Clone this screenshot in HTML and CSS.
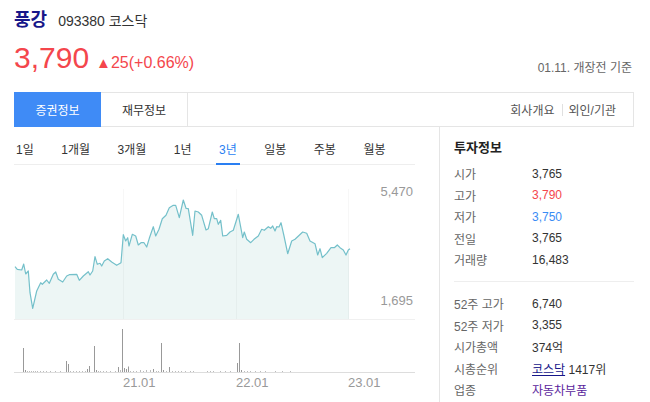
FILE: index.html
```html
<!DOCTYPE html>
<html lang="ko">
<head>
<meta charset="utf-8">
<title>풍강</title>
<link rel="stylesheet" href="styles.css">
</head>
<body>
<div class="wrap">
  <h1 class="title"><span class="name">풍강</span><span class="code">093380 코스닥</span></h1>
  <div class="quote">
    <span class="price">3,790</span>
    <span class="chg"><span class="tri">▲</span>25(+0.66%)</span>
    <span class="basis">01.11. 개장전 기준</span>
  </div>
  <div class="tabs">
    <span class="tab on">증권정보</span>
    <span class="tab">재무정보</span>
    <div class="links"><span>회사개요</span><span class="bar"></span><span>외인/기관</span></div>
  </div>
  <div class="main">
    <div class="chart-col">
      <ul class="periods">
        <li>1일</li><li>1개월</li><li>3개월</li><li>1년</li><li class="on">3년</li><li>일봉</li><li>주봉</li><li>월봉</li>
      </ul>
      <svg class="chart" width="401" height="236" viewBox="14 164 401 236" xmlns="http://www.w3.org/2000/svg">
        <polygon class="area" points="15,265.7 17.3,268.3 21.7,269 23.7,263 25.7,273 28.3,270 30,291.7 32.7,307.3 36.7,290 40.7,281.7 42.3,283.3 46.7,279 49.3,282.3 53.3,273.3 55.7,271 58.3,278.3 62.7,281 66.7,275 69.3,273.7 76.7,273.3 79.3,279.3 83.3,275 88.3,270.7 90,274 92.7,270 95,255.7 97.3,263.3 100,262.3 101.7,265 104.3,260 107.7,257.7 111.7,261 116.7,264.3 121,261.7 123.3,233.7 125.7,240 127.7,236.7 129,245 132.3,233.3 135.7,235 138.3,244 141,241.7 144,241.7 146.7,246 149.3,237.3 153.3,225.7 155.7,235 159,228.3 162.3,217.7 166,214.3 169.3,206.7 173.3,204.3 175.7,204.3 179.3,216.7 183.3,199 186,207.3 188.3,207.7 192.7,234.3 195,210 198.3,211 201.7,214.3 206,229 208.3,227.7 212.3,211 214.3,217.7 216.7,217.7 218.3,223.3 220.7,219.3 222.7,235 226.7,234.3 230,231 233.3,229.3 238.3,213.3 242.7,236.7 244.3,231 246.7,238.3 250.7,241.7 254,238.3 258.3,235 261.7,228.3 264.3,229.3 268.3,225.7 270.7,227.3 272.7,225 275,230 276.7,225.7 279,226 281,221.7 284,235 287.7,252.7 291.7,240 295,238.3 302.7,231 306.7,232.3 310,240 315,242.7 317.7,254 320,247.7 322.3,256.7 326.7,252.3 331,246.7 334.3,246.7 337.3,244 340,246.7 343.3,249 346,254 348.3,249 349,248.5 349,318 15,318"/>
        <path class="grid" d="M123.5 188V318M236.5 188V318M348.5 188V318"/>
        <path class="sep" d="M14 318.5H415"/>
        <polyline class="line" points="15,265.7 17.3,268.3 21.7,269 23.7,263 25.7,273 28.3,270 30,291.7 32.7,307.3 36.7,290 40.7,281.7 42.3,283.3 46.7,279 49.3,282.3 53.3,273.3 55.7,271 58.3,278.3 62.7,281 66.7,275 69.3,273.7 76.7,273.3 79.3,279.3 83.3,275 88.3,270.7 90,274 92.7,270 95,255.7 97.3,263.3 100,262.3 101.7,265 104.3,260 107.7,257.7 111.7,261 116.7,264.3 121,261.7 123.3,233.7 125.7,240 127.7,236.7 129,245 132.3,233.3 135.7,235 138.3,244 141,241.7 144,241.7 146.7,246 149.3,237.3 153.3,225.7 155.7,235 159,228.3 162.3,217.7 166,214.3 169.3,206.7 173.3,204.3 175.7,204.3 179.3,216.7 183.3,199 186,207.3 188.3,207.7 192.7,234.3 195,210 198.3,211 201.7,214.3 206,229 208.3,227.7 212.3,211 214.3,217.7 216.7,217.7 218.3,223.3 220.7,219.3 222.7,235 226.7,234.3 230,231 233.3,229.3 238.3,213.3 242.7,236.7 244.3,231 246.7,238.3 250.7,241.7 254,238.3 258.3,235 261.7,228.3 264.3,229.3 268.3,225.7 270.7,227.3 272.7,225 275,230 276.7,225.7 279,226 281,221.7 284,235 287.7,252.7 291.7,240 295,238.3 302.7,231 306.7,232.3 310,240 315,242.7 317.7,254 320,247.7 322.3,256.7 326.7,252.3 331,246.7 334.3,246.7 337.3,244 340,246.7 343.3,249 346,254 348.3,249 350,247.7"/>
        <text class="axis" x="413" y="195" text-anchor="end">5,470</text>
        <text class="axis" x="413" y="304" text-anchor="end">1,695</text>
        <path class="vol" d="M23.5 371V347M25.5 371V369M66.5 371V360M68.5 371V363M87.5 371V368M89.5 371V365M94.5 371V345M96.5 371V369M118.5 371V366M122.5 371V328M124.5 371V367M126.5 371V368M128.5 371V365.5M153.5 371V368M161.5 371V342M163.5 371V369M169.5 371V366M237.5 371V362M239.5 371V342M241.5 371V369"/>
        <path class="vol small" d="M27.5 371V370M29.5 371V370M31.5 371V370M33.5 371V370M35.5 371V370M37.5 371V370M40.5 371V370M43.5 371V370M46.5 371V370M50.5 371V370M55.5 371V370M60.5 371V370M70.5 371V370M73.5 371V370M76.5 371V370M79.5 371V370M82.5 371V370M85.5 371V370M98.5 371V370M100.5 371V370M103.5 371V370M106.5 371V370M110.5 371V370M115.5 371V370M120.5 371V369M130.5 371V370M133.5 371V370M136.5 371V370M140.5 371V369M143.5 371V370M146.5 371V369M150.5 371V369M156.5 371V370M158.5 371V370M166.5 371V370M172.5 371V370M175.5 371V370M178.5 371V370M181.5 371V370M185.5 371V370M190.5 371V370M193.5 371V370M207.5 371V370M210.5 371V370M213.5 371V370M220.5 371V370M225.5 371V370M230.5 371V370M244.5 371V370M247.5 371V370M250.5 371V370M255.5 371V370M260.5 371V370M265.5 371V370M275.5 371V370M282.5 371V370M290.5 371V370"/>
        <path class="base" d="M14 371.5H415"/>
        <text class="axis" x="123" y="386">21.01</text>
        <text class="axis" x="236" y="386">22.01</text>
        <text class="axis" x="348" y="386">23.01</text>
      </svg>
    </div>
    <div class="info">
      <h2 class="info-title">투자정보</h2>
      <dl class="grp">
        <div class="row"><dt>시가</dt><dd>3,765</dd></div>
        <div class="row"><dt>고가</dt><dd class="up">3,790</dd></div>
        <div class="row"><dt>저가</dt><dd class="down">3,750</dd></div>
        <div class="row"><dt>전일</dt><dd>3,765</dd></div>
        <div class="row"><dt>거래량</dt><dd>16,483</dd></div>
      </dl>
      <dl class="grp grp2">
        <div class="row"><dt>52주 고가</dt><dd>6,740</dd></div>
        <div class="row"><dt>52주 저가</dt><dd>3,355</dd></div>
        <div class="row"><dt>시가총액</dt><dd>374억</dd></div>
        <div class="row"><dt>시총순위</dt><dd><span class="lnk">코스닥</span> 1417위</dd></div>
        <div class="row"><dt>업종</dt><dd><span class="lnk2">자동차부품</span></dd></div>
      </dl>
    </div>
  </div>
</div>
</body>
</html>
```

FILE: styles.css
```css
* { box-sizing: border-box; }
html, body { margin: 0; padding: 0; background: #fff; }
body {
  font-family: "Liberation Sans", "Noto Sans CJK KR", sans-serif;
  color: #333;
  height: 402px;
  overflow: hidden;
}
.wrap { width: 620px; margin-left: 14px; padding-top: 8px; }

.title {
  margin: 0;
  display: flex;
  align-items: baseline;
  line-height: 24px;
}
.name { font-size: 18px; font-weight: 700; color: #17178a; }
.code { font-size: 14px; font-weight: 400; color: #333; margin-left: 11px; }

.quote {
  display: flex;
  align-items: baseline;
  height: 34px;
  margin-top: 8px;
}
.price { font-size: 30px; line-height: 34px; color: #f4464c; }
.chg { font-size: 16px; color: #f4464c; margin-left: 7px; }
.tri { font-size: 15px; margin-right: 0; }
.basis {
  margin-left: auto;
  margin-right: 2px;
  align-self: flex-end;
  font-size: 12px;
  line-height: 14px;
  color: #666;
}

.tabs {
  display: flex;
  height: 35px;
  margin-top: 17px;
  border: 1px solid #e5e5e5;
}
.tab {
  width: 87px;
  display: flex;
  align-items: center;
  justify-content: center;
  font-size: 12px;
  color: #333;
  border-right: 1px solid #e5e5e5;
}
.tab.on {
  margin: -1px 0 -1px -1px;
  width: 87px;
  background: #3f8bf6;
  color: #fff;
  border-right: 0;
}
.links {
  margin-left: auto;
  display: flex;
  align-items: center;
  padding-right: 17px;
  font-size: 12px;
  color: #555;
}
.bar { width: 1px; height: 12px; background: #e0e0e0; margin: 0 6px 0 7px; }

.main { display: flex; }
.chart-col { width: 401px; flex: none; }
.periods {
  display: flex;
  gap: 21.5px;
  margin: 0;
  padding: 0;
  list-style: none;
  border-bottom: 1px solid #eee;
}
.periods li {
  padding: 14px 3px 4px;
  font-size: 12px;
  line-height: 18px;
  color: #333;
  border-bottom: 2px solid transparent;
  margin-bottom: -1px;
}
.periods li:first-child { margin-left: -1px; }
.periods li.on { color: #2a7ff2; border-bottom-color: #2a7ff2; }

.chart { display: block; }
.area { fill: #edf6f5; }
.grid { stroke: #000; stroke-opacity: 0.03; stroke-width: 1; fill: none; }
.sep { stroke: #f0f0f0; stroke-width: 1; }
.line { fill: none; stroke: #74c0ca; stroke-width: 1.2; stroke-linejoin: round; }
.axis { font-family: "Liberation Sans", sans-serif; font-size: 13px; fill: #999; }
.vol { stroke: #999; stroke-width: 1; fill: none; }
.vol.small { stroke: #bbb; }
.base { stroke: #ddd; stroke-width: 1; }

.info {
  margin-left: 24px;
  width: 195px;
  flex: none;
  height: 276px;
  border-left: 1px solid #e5e5e5;
  padding: 11px 0 0 14px;
}
.info-title { margin: 0; font-size: 13px; line-height: 20px; font-weight: 700; color: #222; }
.grp { margin: 5px 0 0; }
.grp2 { margin-top: 10.5px; padding-top: 11px; border-top: 1px solid #eee; }
.row { display: flex; align-items: center; height: 21.5px; font-size: 12px; }
.row dt { width: 78px; color: #666; }
.row dd { margin: 0; color: #333; }
.row dd.up { color: #f4464c; }
.row dd.down { color: #3a8cf5; }
.lnk { color: #17178a; text-decoration: underline; }
.lnk2 { color: #5a1e9c; }
```
